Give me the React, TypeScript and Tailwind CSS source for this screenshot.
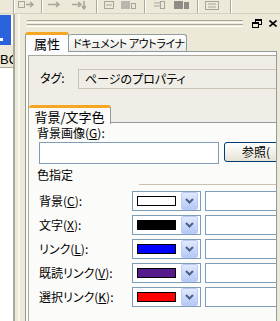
import type { ReactNode } from "react";

type ColorRow = { label: string; key: string; color: string };

const rows: ColorRow[] = [
  { label: "背景", key: "C", color: "#ffffff" },
  { label: "文字", key: "X", color: "#000000" },
  { label: "リンク", key: "L", color: "#0000ff" },
  { label: "既読リンク", key: "V", color: "#551a8b" },
  { label: "選択リンク", key: "K", color: "#ff0000" },
];

function Label({ text, k }: { text: string; k: string }) {
  return (
    <span className="whitespace-nowrap">
      {text}(<u>{k}</u>):
    </span>
  );
}

function ToolIcon({ children, w }: { children: ReactNode; w: number }) {
  return (
    <svg width={w} height="10" viewBox={`0 0 ${w} 10`} className="shrink-0" aria-hidden>
      {children}
    </svg>
  );
}

function Sep() {
  return <div className="h-[13px] w-[2px] shrink-0 border-l border-[#aca899] border-r border-r-white" />;
}

function Toolbar() {
  return (
    <div className="flex h-[14px] shrink-0 items-start border-b border-[#d6d2c2] bg-[#ece9d8]">
      <div className="w-[13px] shrink-0" />
      <Sep />
      <div className="ml-[3px] mt-[1px]">
        <ToolIcon w={18}>
          <rect x="0.5" y="0.5" width="6" height="6" fill="none" stroke="#a7a59b" />
          <path d="M8 3.5h7M12 1l3 2.5-3 2.5" fill="none" stroke="#a7a59b" strokeWidth="1.5" />
        </ToolIcon>
      </div>
      <div className="ml-[5px]" />
      <Sep />
      <div className="ml-[5px] mt-[1px]">
        <ToolIcon w={13}>
          <path d="M0 3.5h10M8 1l3 2.5-3 2.5" fill="none" stroke="#a7a59b" strokeWidth="1.5" />
        </ToolIcon>
      </div>
      <div className="ml-[11px] mt-[1px]">
        <ToolIcon w={14}>
          <path d="M0 3.5h8M6 1l3 2.5-3 2.5M12 0v7M10 5l2 3 2-3" fill="none" stroke="#a7a59b" strokeWidth="1.5" />
        </ToolIcon>
      </div>
      <div className="ml-[10px]" />
      <Sep />
      <div className="ml-[6px] mt-[1px]">
        <ToolIcon w={11}>
          <rect x="0.5" y="0.5" width="9" height="7" fill="none" stroke="#a7a59b" />
          <path d="M2 4h6" stroke="#a7a59b" />
        </ToolIcon>
      </div>
      <div className="ml-[6px] mt-[1px]">
        <ToolIcon w={15}>
          <rect x="0" y="0" width="9" height="8" fill="#b9b7ad" />
          <rect x="10.5" y="2.5" width="4" height="5" fill="none" stroke="#a7a59b" />
        </ToolIcon>
      </div>
      <div className="ml-[8px]" />
      <Sep />
      <div className="ml-[8px] mt-[1px]">
        <ToolIcon w={11}>
          <path d="M0 2h6M0 5h6" stroke="#a7a59b" />
          <rect x="6.5" y="0.5" width="4" height="7" fill="none" stroke="#a7a59b" />
        </ToolIcon>
      </div>
      <div className="ml-[9px] mt-[1px]">
        <ToolIcon w={15}>
          <rect x="0" y="0" width="9" height="8" fill="#8e8c84" />
          <rect x="10" y="1" width="5" height="7" fill="#8e8c84" />
        </ToolIcon>
      </div>
      <div className="ml-[8px]" />
      <Sep />
      <div className="ml-[6px] mt-[1px]">
        <ToolIcon w={15}>
          <rect x="0.5" y="0.5" width="13" height="8" fill="none" stroke="#a7a59b" />
          <path d="M3 3h8M3 6h8" stroke="#a7a59b" />
        </ToolIcon>
      </div>
      <div className="ml-[10px]" />
      <Sep />
    </div>
  );
}

function LeftStrip() {
  return (
    <div className="flex w-[15px] shrink-0 flex-col border-r-2 border-[#aca899] bg-[#ece9d8]">
      <div className="relative mt-[1px] h-[30px] border-r-2 border-white bg-[#2a62dc]">
        <div className="absolute bottom-[4px] left-0 h-[3px] w-[3px] bg-white" />
      </div>
      <div className="h-[6px]" />
      <div className="h-[17px] overflow-hidden border-b border-[#aca899] font-['Liberation_Sans',sans-serif] text-[13px] leading-[17px]">
        BC
      </div>
      <div className="flex-1 bg-white" />
    </div>
  );
}

function DropButton() {
  return (
    <div className="flex h-[18px] w-[17px] items-center justify-center rounded-[2px] border border-[#bccbf1] bg-gradient-to-b from-[#e0e9fe] to-[#b5c9f7]">
      <svg width="9" height="6" viewBox="0 0 9 6" aria-hidden>
        <path d="M1 1l3.5 3.5L8 1" fill="none" stroke="#4d6185" strokeWidth="2" />
      </svg>
    </div>
  );
}

function Panel() {
  return (
    <div className="flex min-w-0 flex-1 flex-col border-l-2 border-[#f5f4ee] bg-[#ece9d8] pl-[3px]">
      {/* title bar */}
      <div className="flex h-[18px] shrink-0 items-center pl-[4px]">
        <div className="flex w-[216px] flex-col gap-[1px]">
          <div className="h-[1px] bg-[#aca899]" />
          <div className="h-[1px] bg-white" />
          <div className="h-[1px] bg-[#aca899]" />
          <div className="h-[1px] bg-white" />
        </div>
        <svg width="11" height="9" viewBox="0 0 11 9" className="ml-[9px]" aria-hidden>
          <rect x="3.5" y="0.5" width="6" height="5" fill="none" stroke="#000" />
          <rect x="3" y="0" width="7" height="2" fill="#000" />
          <rect x="0.5" y="3.5" width="6" height="5" fill="#ece9d8" stroke="#000" />
          <rect x="0" y="3" width="7" height="2" fill="#000" />
        </svg>
        <svg width="8" height="7" viewBox="0 0 8 7" className="ml-[6px]" aria-hidden>
          <path d="M0.5 0.5l7 6M7.5 0.5l-7 6" stroke="#000" strokeWidth="1.6" />
        </svg>
      </div>

      {/* tabs */}
      <div className="flex h-[19px] shrink-0 items-end pl-[2px]">
        <div className="relative z-10 -mb-[1px] flex h-[20px] w-[44px] shrink-0 items-center justify-center rounded-t-[3px] border-x border-t-[3px] border-x-[#919b9c] border-t-[#f5a623] bg-[#fcfcfe] text-[13px]">
          属性
        </div>
        <div className="flex h-[17px] w-[118px] shrink-0 items-center overflow-hidden whitespace-nowrap rounded-t-[3px] border-y border-r border-b-0 border-[#919b9c] bg-gradient-to-b from-white to-[#ecebe5] pl-[4px] text-[11px] tracking-[-0.4px]">
          ドキュメント アウトライナ
        </div>
      </div>

      {/* tab page */}
      <div className="ml-[2px] mr-[3px] flex min-h-0 flex-1 flex-col overflow-hidden border-x border-t border-[#919b9c] bg-[#fcfcfe] pl-[2px] pt-[3px]">
        <div className="flex min-h-0 flex-1 flex-col overflow-hidden border-l border-t border-[#aca899] bg-[#efede5]">
          {/* tag row */}
          <div className="flex h-[33px] shrink-0 items-end pl-[11px]">
            <span className="w-[38px] pb-[5px]">タグ:</span>
            <div className="flex h-[20px] flex-1 items-center whitespace-nowrap border border-r-0 border-[#c9c6b8] pl-[6px]">
              ページのプロパティ
            </div>
          </div>
          <div className="h-[16px] shrink-0" />

          {/* inner tab */}
          <div className="flex h-[18px] shrink-0 items-end">
            <div className="relative z-10 -mb-[1px] flex h-[19px] w-[82px] items-center justify-center rounded-t-[3px] border-r border-t-[3px] border-r-[#919b9c] border-t-[#f5a623] bg-[#fbfbf9] text-[13px]">
              背景/文字色
            </div>
            <div className="flex-1 border-b border-[#919b9c]" />
          </div>

          {/* inner tab page */}
          <div className="flex min-h-0 flex-1 flex-col bg-[#fbfbf9] pl-[8px]">
            <div className="mt-[4px] h-[12px] leading-[12px]">
              <Label text="背景画像" k="G" />
            </div>
            <div className="mt-[3px] flex h-[22px] items-start pl-[2px]">
              <div className="h-[22px] w-[180px] shrink-0 border border-[#7f9db9] bg-white" />
              <div className="ml-[5px] flex h-[20px] w-[60px] shrink-0 items-center whitespace-nowrap rounded-[3px] border border-[#003c74] bg-gradient-to-b from-white to-[#e6e3d6] pl-[17px]">
                参照(
              </div>
            </div>
            <div className="mt-[5px] h-[12px] leading-[12px]">色指定</div>
            <div className="ml-[102px] mt-[3px] h-[1px] bg-[#c5c2b2]" />
            <div className="mt-[6px] flex flex-col gap-[4px] pl-[2px]">
              {rows.map((r) => (
                <div key={r.key} className="flex h-[20px] items-center">
                  <div className="w-[93px] shrink-0">
                    <Label text={r.label} k={r.key} />
                  </div>
                  <div className="flex h-[20px] w-[69px] shrink-0 items-center border border-[#7f9db9] bg-white pl-[4px]">
                    <div className="h-[10px] w-[39px] shrink-0 border border-black" style={{ backgroundColor: r.color }} />
                    <div className="ml-[5px]">
                      <DropButton />
                    </div>
                  </div>
                  <div className="ml-[4px] h-[20px] w-[80px] shrink-0 border border-[#7f9db9] bg-white" />
                </div>
              ))}
            </div>
          </div>
        </div>
      </div>
    </div>
  );
}

export default function App() {
  return (
    <div className="flex h-[321px] w-[280px] flex-col overflow-hidden bg-[#ece9d8] font-['Noto_Sans_CJK_JP',sans-serif] text-[12px] leading-none text-black [font-feature-settings:'palt']">
      <Toolbar />
      <div className="flex min-h-0 flex-1">
        <LeftStrip />
        <div className="w-[3px] shrink-0 bg-[#ece9d8]" />
        <Panel />
      </div>
    </div>
  );
}
